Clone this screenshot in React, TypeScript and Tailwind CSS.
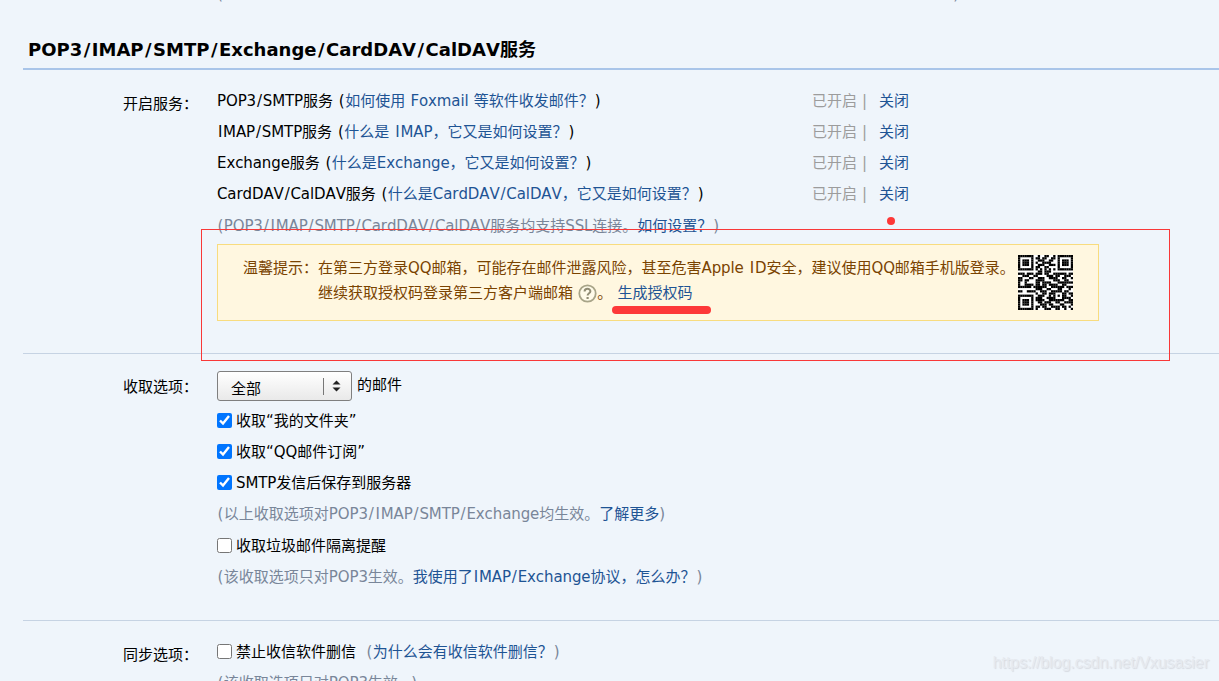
import type { ReactNode } from 'react'

const services = [
  { name: 'POP3/SMTP', before: '如何使用 ', app: 'Foxmail', after: ' 等软件收发邮件？' },
  { name: 'IMAP/SMTP', before: '什么是 ', app: 'IMAP', after: '，它又是如何设置？' },
  { name: 'Exchange', before: '什么是', app: 'Exchange', after: '，它又是如何设置？' },
  { name: 'CardDAV/CalDAV', before: '什么是', app: 'CardDAV/CalDAV', after: '，它又是如何设置？' },
]

const qrRows = [
  '1111111001001100101111111',
  '1000001011011001101000001',
  '1011101001110011001011101',
  '1011101010011110001011101',
  '1011101001110011101011101',
  '1000001011001100001000001',
  '1111111010101010101111111',
  '0000000001101110000000000',
  '1110111011101100111111011',
  '0011100110000111011001110',
  '1100011001110011110011001',
  '1101100011110000111001100',
  '1001000011011110001111111',
  '1001111011011011110011000',
  '1111110111111001111110111',
  '0000000011100110001100010',
  '1100111100111001111101100',
  '0000000010011011100011011',
  '1111111001110010101011001',
  '1000001011100111100011110',
  '1011101011110011111110011',
  '1011101001101110011001111',
  '1011101000111011000110001',
  '1000001011011001111011010',
  '1111111010001110011001001',
]

// Slashes, capital I and brackets get a little extra room around them
function Latin({ children }: { children: string }) {
  return (
    <span className="tracking-[-0.1px]">
      {children.split(/([/I()])/).map((part, i) => {
        if (part === '/' || part === 'I') return <span key={i} className="px-[0.9px]">{part}</span>
        if (part === '(' || part === ')') return <span key={i} className="px-[0.5px]">{part}</span>
        return part
      })}
    </span>
  )
}

function Link({ children }: { children: ReactNode }) {
  return <a className="text-[#1e5494] cursor-pointer hover:underline">{children}</a>
}

function Row({ children, muted }: { children: ReactNode; muted?: boolean }) {
  return (
    <div className={`h-[31px] leading-[31px] flex items-center ${muted ? 'text-[#798699]' : 'text-black'}`}>
      <div className="pt-0.5">{children}</div>
    </div>
  )
}

function Check({ checked, children }: { checked?: boolean; children: ReactNode }) {
  return (
    <label className="h-[31px] flex items-center gap-1">
      <input type="checkbox" defaultChecked={checked} className="w-[15px] h-[15px] m-0" />
      <span className="pt-0.5">{children}</span>
    </label>
  )
}

function Label({ children, className }: { children: ReactNode; className: string }) {
  return <div className={`w-[175px] mr-[19px] shrink-0 text-right leading-[30px] ${className}`}>{children}</div>
}

function QrCode() {
  return (
    <svg width="55" height="55" viewBox="0 0 25 25" className="shrink-0 bg-white">
      {qrRows.map((row, y) =>
        row.split('').map((c, x) => (c === '1' ? <rect key={`${x}-${y}`} x={x} y={y} width="1.03" height="1.03" /> : null))
      )}
    </svg>
  )
}

function HelpIcon() {
  return (
    <svg width="19" height="19" viewBox="0 0 19 19" fill="none" className="inline-block align-[-5px]">
      <circle cx="9.5" cy="9.5" r="8.2" fill="#fffbe9" stroke="#a8a488" strokeWidth="1.8" />
      <path d="M6.6 7.5C6.6 3.9 12.5 4 12.4 7.3C12.4 9.3 9.6 9.2 9.6 11.6" stroke="#918d75" strokeWidth="2" />
      <path d="M8.5 13h2.2v2H8.500z" fill="#918d75" />
    </svg>
  )
}

export default function App() {
  return (
    <div className="relative w-[1219px] h-[681px] overflow-hidden bg-[#eff5fb] pl-[23px] text-[15px] whitespace-pre [font-kerning:none] [word-spacing:0.5px] font-['DejaVu_Sans','Noto_Sans_CJK_SC',sans-serif]">
      {/* Tail of the previous section */}
      <div className="h-[3px] overflow-hidden flex items-end pl-[194px] text-[#798699]">
        <div className="flex w-[742px] justify-between leading-[18px]">
          <span>(</span>
          <span>)</span>
        </div>
      </div>

      <h1 className="h-[67px] pt-[33px] pl-[5px] text-[18px] leading-[28px] font-bold border-b-2 border-[#a9c5e9] text-black">
        {'POP3/IMAP/SMTP/Exchange/CardDAV/CalDAV服务'.split(/(\/)/).map((part, i) =>
          part === '/' ? <span key={i} className="px-[1.5px]">/</span> : part
        )}
      </h1>

      {/* Services */}
      <section className="flex h-[284px] pt-[15px] border-b border-[#c6d3e3]">
        <Label className="pt-[4px]">开启服务：</Label>
        <div>
          {services.map((s) => (
            <div key={s.name} className="flex">
              <div className="w-[595px]">
                <Row>
                  <Latin>{s.name}</Latin>服务 <Latin>(</Latin>
                  <Link>
                    {s.before}
                    <Latin>{s.app}</Latin>
                    {s.after}
                  </Link>
                  <span className="pl-px">)</span>
                </Row>
              </div>
              <div className="flex items-center pt-0.5 text-[#9c9c9c]">
                <span className="w-[50px]">已开启</span>
                <span className="w-[17px]">|</span>
                <Link>关闭</Link>
              </div>
            </div>
          ))}
          <div className="pt-px">
            <Row muted>
              <Latin>(POP3/IMAP/SMTP/CardDAV/CalDAV</Latin>服务均支持<Latin>SSL</Latin>连接。<Link>如何设置？</Link>
              <span className="pl-px">)</span>
            </Row>
          </div>
          <div className="mt-[3px] w-[882px] h-[77px] pt-[10px] pl-[25px] pr-[25px] flex justify-between border border-[#f8dc7f] bg-[#fff7e0] text-[#7a4300]">
            <div className="flex pt-px leading-[25px]">
              <div>温馨提示：</div>
              <div>
                <div>在第三方登录<Latin>QQ</Latin>邮箱，可能存在邮件泄露风险，甚至危害<Latin>Apple ID</Latin>安全，建议使用<Latin>QQ</Latin>邮箱手机版登录。</div>
                <div>
                  继续获取授权码登录第三方客户端邮箱 <HelpIcon />。 <Link>生成授权码</Link>
                </div>
              </div>
            </div>
            <QrCode />
          </div>
        </div>
      </section>

      {/* Fetch options */}
      <section className="flex h-[267px] pt-[17px] border-b border-[#c6d3e3]">
        <Label className="pt-px">收取选项：</Label>
        <div>
          <div className="flex h-[34px]">
            <button className="flex items-center w-[135px] h-[30px] pl-[13px] pr-[10px] rounded-[3px] border border-[#7f7f7f] bg-linear-to-b from-white to-[#e9e9e9]">
              <span className="flex-1 text-left pt-1.5">全部</span>
              <span className="w-px h-[17px] mr-[8px] bg-[#777]" />
              <svg width="9" height="12" viewBox="0 0 9 12" fill="#222">
                <path d="M4.500 0.500L8.500 4.500H0.500zM4.500 11.500L8.500 7.500H0.500z" />
              </svg>
            </button>
            <span className="ml-[5px] leading-[29px]">的邮件</span>
          </div>
          <Check checked>收取“我的文件夹”</Check>
          <Check checked>收取“<Latin>QQ</Latin>邮件订阅”</Check>
          <Check checked><Latin>SMTP</Latin>发信后保存到服务器</Check>
          <Row muted>
            <Latin>(</Latin>以上收取选项对<Latin>POP3/IMAP/SMTP/Exchange</Latin>均生效。<Link>了解更多</Link>)
          </Row>
          <div className="pt-px">
            <Check>收取垃圾邮件隔离提醒</Check>
          </div>
          <Row muted>
            <Latin>(</Latin>该收取选项只对<Latin>POP3</Latin>生效。<Link>我使用了<Latin>IMAP/Exchange</Latin>协议，怎么办？</Link>
            <span className="pl-px">)</span>
          </Row>
        </div>
      </section>

      {/* Sync options */}
      <section className="flex pt-[15px]">
        <Label className="pt-[4px]">同步选项：</Label>
        <div>
          <div className="flex items-center">
            <Check>禁止收信软件删信</Check>
            <span className="ml-[10px] pt-0.5 text-[#798699]">
              <Latin>(</Latin><Link>为什么会有收信软件删信？</Link>
              <span className="pl-px">)</span>
            </span>
          </div>
          <Row muted>
            <Latin>(</Latin>该收取选项只对<Latin>POP3</Latin>生效。<span className="pl-1.5">)</span>
          </Row>
        </div>
      </section>

      {/* Hand-drawn marks over the page */}
      <div className="absolute left-[201px] top-[229px] w-[969px] h-[132px] border border-[#f93838]" />
      <div className="absolute left-[887px] top-[217px] w-[8px] h-[8px] rounded-full bg-[#fd3838]" />
      <div className="absolute left-[612px] top-[306px] w-[99px] h-[8px] rounded-full bg-[#fd3838]" />
      <div className="absolute right-[10px] bottom-[7px] text-[16px] leading-[22px] tracking-[-0.05px] text-[#e6eaf0] [text-shadow:1px_1px_1px_#d6dae0] font-['Liberation_Sans',sans-serif]">
        https://blog.csdn.net/Vxusasier
      </div>
    </div>
  )
}
